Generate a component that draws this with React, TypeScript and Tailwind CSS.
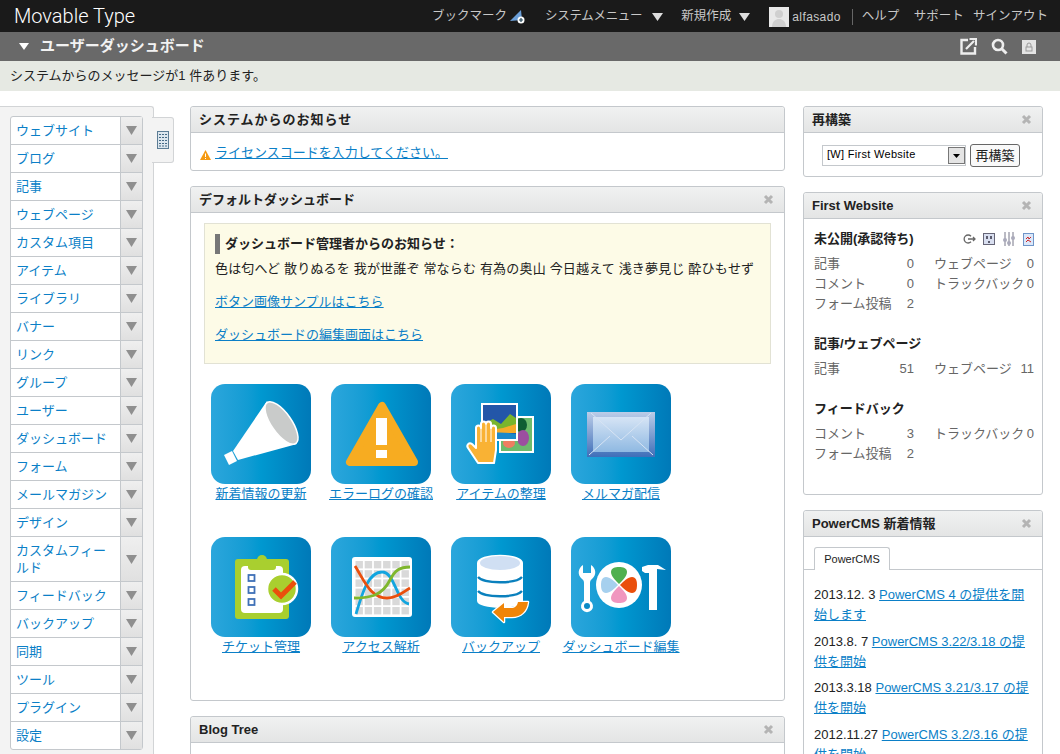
import type { ReactNode } from 'react'

const FONT = "font-['Liberation_Sans','Noto_Sans_CJK_JP',sans-serif]"

const menuItems = [
  'ウェブサイト', 'ブログ', '記事', 'ウェブページ', 'カスタム項目', 'アイテム', 'ライブラリ', 'バナー',
  'リンク', 'グループ', 'ユーザー', 'ダッシュボード', 'フォーム', 'メールマガジン', 'デザイン',
  'カスタムフィールド', 'フィードバック', 'バックアップ', '同期', 'ツール', 'プラグイン', '設定',
]

function CloseIcon() {
  return (
    <svg width="11" height="11" viewBox="0 0 11 11" className="shrink-0">
      <path d="M2 2l7 7M9 2l-7 7" stroke="#b4b4b4" strokeWidth="3" />
    </svg>
  )
}

function Widget({ title, titleClass = '', closable = true, className = '', children }: { title: string; titleClass?: string; closable?: boolean; className?: string; children: ReactNode }) {
  return (
    <section className={`border border-[#c4c8cc] rounded-[3px] bg-white ${className}`}>
      <header className="h-[26px] flex items-center justify-between pl-[8px] pr-[10px] bg-linear-to-b from-[#f0f1f1] to-[#e4e5e5] border-b border-[#c4c8cc] rounded-t-[3px]">
        <h2 className={`text-[13px] font-bold text-[#222] leading-none ${titleClass}`}>{title}</h2>
        {closable && <CloseIcon />}
      </header>
      {children}
    </section>
  )
}

function Megaphone() {
  return (
    <svg viewBox="0 0 100 100" className="w-full h-full">
      <path d="M13 71l8-4 5 10-8 4z" fill="#fff" />
      <path d="M56 17L22 67l5 9 59-16z" fill="#fff" />
      <ellipse cx="70.500" cy="39" rx="10" ry="25" transform="rotate(-35 70.500 39)" fill="#c9cbca" stroke="#fff" strokeWidth="1.500" />
    </svg>
  )
}

function Warning() {
  return (
    <svg viewBox="0 0 100 100" className="w-full h-full">
      <path d="M51 22L19 78h64z" fill="#f7ac21" stroke="#f7ac21" strokeWidth="8" strokeLinejoin="round" />
      <rect x="45" y="34" width="11" height="27" fill="#fff" />
      <rect x="45" y="66" width="11" height="8" fill="#fff" />
    </svg>
  )
}

function Photos() {
  return (
    <svg viewBox="0 0 100 100" className="w-full h-full">
      <rect x="48" y="32" width="35" height="37" fill="#fff" />
      <rect x="50" y="34" width="31" height="33" fill="#6dbb6d" />
      <ellipse cx="70" cy="41" rx="6" ry="7" fill="#0f5d34" />
      <ellipse cx="72" cy="54" rx="6" ry="8" fill="#9c4fa0" />
      <ellipse cx="58" cy="59" rx="6" ry="5" fill="#ef7d62" />
      <rect x="30" y="19" width="37" height="38" fill="#fff" />
      <rect x="32" y="21" width="33" height="34" fill="#2356a8" />
      <path d="M32 40l10-5 8 5 9-10 6 4v13H32z" fill="#7ab52d" />
      <path d="M32 47l20-3 13-4v9H32z" fill="#f6ab2a" />
      <path d="M32 50c10-2 22-2 33 0v5H32z" fill="#1b88c9" />
      <path d="M27 79L17 64c-2-3 1-6 4-4l4 4V44a2.500 2.500 0 0 1 5 0V40a2.500 2.500 0 0 1 5 0a2.500 2.500 0 0 1 5 0V44a2.500 2.500 0 0 1 5 0V66L43 79z" fill="#f9b234" stroke="#fff" strokeWidth="2" strokeLinejoin="round" />
      <path d="M30 44V58M35 41V58M40 44V58" stroke="#fff" strokeWidth="1" />
    </svg>
  )
}

function Envelope() {
  return (
    <svg viewBox="0 0 100 100" className="w-full h-full">
      <defs>
        <linearGradient id="env" x1="0" y1="0" x2="0" y2="1">
          <stop offset="0" stopColor="#d6e4f5" />
          <stop offset="1" stopColor="#8fb9e2" />
        </linearGradient>
        <linearGradient id="envOuter" x1="0" y1="0" x2="0" y2="1">
          <stop offset="0" stopColor="#bccde8" />
          <stop offset="1" stopColor="#3f6fb9" />
        </linearGradient>
      </defs>
      <rect x="16" y="28" width="68" height="45" fill="url(#envOuter)" />
      <rect x="22" y="33" width="56" height="35" fill="url(#env)" />
      <path d="M20 29l30 27 30-27M18 71l21-19M82 71L61 52" fill="none" stroke="#d7e4f4" strokeWidth="1" />
    </svg>
  )
}

function Clipboard() {
  return (
    <svg viewBox="0 0 100 100" className="w-full h-full">
      <rect x="24" y="22" width="54" height="60" rx="3" fill="#a9cf2f" />
      <rect x="46" y="18" width="10" height="10" rx="5" fill="#a9cf2f" />
      <rect x="30" y="29" width="42" height="47" rx="4" fill="#fff" />
      <path d="M37 25h28v5a3 3 0 0 1-3 3H40a3 3 0 0 1-3-3z" fill="#a9cf2f" />
      {[38, 50, 62].map((y) => (
        <rect key={y} x="37.500" y={y} width="6" height="6" fill="#fff" stroke="#3f70b7" strokeWidth="1.800" />
      ))}
      <circle cx="71" cy="52" r="15" fill="#a9cf2f" stroke="#fff" strokeWidth="2.500" />
      <path d="M63 52l7 7 14-14" fill="none" stroke="#ea4f0c" strokeWidth="5" />
    </svg>
  )
}

function ChartIcon() {
  const cells = [0, 1, 2, 3, 4, 5]
  return (
    <svg viewBox="0 0 100 100" className="w-full h-full">
      <rect x="21" y="20" width="60" height="60" rx="3" fill="#fff" />
      {cells.map((r) => cells.map((c) => (
        <rect key={`${r}-${c}`} x={24.5 + c * 9.2} y={24 + r * 9.2} width="7.4" height="7.4" fill="#d9d9d9" />
      )))}
      <path d="M25 77c6-20 12-42 26-42 13 0 14 30 27 32" fill="none" stroke="#12a5df" strokeWidth="2.800" />
      <path d="M24 29c9 14 15 32 32 32 10 0 16-6 23-10" fill="none" stroke="#ea4f0c" strokeWidth="2.800" />
      <path d="M23 61c16 0 28-2 36-18 5-10 10-13 20-13" fill="none" stroke="#7fb72d" strokeWidth="2.800" />
    </svg>
  )
}

function Database() {
  return (
    <svg viewBox="0 0 100 100" className="w-full h-full">
      <path d="M26 26c0-11 46-11 46 0v38c0 9-46 9-46 0z" fill="#fff" />
      <ellipse cx="49" cy="26" rx="20" ry="7" fill="#d0dff3" />
      <path d="M27 40c6 7 38 7 44 0M27 54c6 7 38 7 44 0" fill="none" stroke="#0a80bd" strokeWidth="2.400" />
      <path d="M42 75L53 66V71H60c4 0 6-2 7-6H77c-1 9-7 15-16 15H53V85z" fill="#f08508" stroke="#fff" strokeWidth="2.500" strokeLinejoin="round" paintOrder="stroke" />
    </svg>
  )
}

function Tools() {
  const petal = 'M48 47C44 43 40 39 40 35C40 31 44 30 48 30C52 30 56 31 56 35C56 39 52 43 48 47z'
  return (
    <svg viewBox="0 0 100 100" className="w-full h-full">
      <path d="M12 28c-5 3-6 10-1 14 2 1 2 3 2 5v17a6 6 0 1 0 6 0V47c0-2 0-4 2-5 5-4 4-11-1-14v8h-8z" fill="#fff" />
      <circle cx="16" cy="69" r="3" fill="#0a8ac6" />
      <circle cx="48" cy="48" r="23" fill="#fff" />
      <path d={petal} fill="#4fb04f" />
      <path d={petal} fill="#ea4f0c" transform="rotate(90 48 48)" />
      <path d={petal} fill="#f096bf" transform="rotate(180 48 48)" />
      <path d={petal} fill="#a6d0ee" transform="rotate(270 48 48)" />
      <path d="M71 30l6-2h10l8 5-9-1v41h-8V36h-4l-3-2z" fill="#fff" />
    </svg>
  )
}

const tiles = [
  { label: '新着情報の更新', icon: <Megaphone /> },
  { label: 'エラーログの確認', icon: <Warning /> },
  { label: 'アイテムの整理', icon: <Photos /> },
  { label: 'メルマガ配信', icon: <Envelope /> },
  { label: 'チケット管理', icon: <Clipboard /> },
  { label: 'アクセス解析', icon: <ChartIcon /> },
  { label: 'バックアップ', icon: <Database /> },
  { label: 'ダッシュボード編集', icon: <Tools /> },
]

function Sidebar() {
  return (
    <aside className="relative w-[154px] shrink-0 bg-[#f3f3f3] border-t border-r border-[#d2d4d6] rounded-tr-[3px] pt-[9px] pl-[10px] h-[660px]">
      <ul className="w-[133px] border border-[#c4c8cc] rounded-[3px] bg-white">
        {menuItems.map((item) => (
          <li key={item} className="flex border-b last:border-b-0 border-[#c4c8cc]">
            <a className="flex-1 min-w-0 min-h-[27px] pl-[5px] pr-[4px] py-[5px] text-[13px] leading-[17px] text-[#0b7fc7]">{item}</a>
            <div className="w-[22px] shrink-0 border-l border-[#c4c8cc] bg-linear-to-b from-[#efefef] to-[#e0e0e0] flex items-center justify-center">
              <svg width="11" height="9" viewBox="0 0 11 9"><path d="M0 0h11L5.500 9z" fill="#8f8f8f" /></svg>
            </div>
          </li>
        ))}
      </ul>
      <div className="absolute left-[152px] top-[10px] w-[22px] h-[46px] bg-[#f3f3f3] border border-l-0 border-[#d2d4d6] rounded-r-[3px] flex items-center justify-center">
        <svg width="12" height="18" viewBox="0 0 12 18">
          <rect x=".5" y=".5" width="11" height="17" fill="#dce6ee" stroke="#5b7c95" />
          <path d="M2 3.500h8M2 6.500h8M2 9.500h8M2 12.500h8M2 15h8" stroke="#456a86" strokeWidth="1" strokeDasharray="2 1" />
        </svg>
      </div>
    </aside>
  )
}

function Stat({ label, value, wide = false }: { label: string; value: string; wide?: boolean }) {
  return (
    <div className={`flex justify-between ${wide ? 'w-[100px] ml-[20px]' : 'w-[100px]'}`}>
      <span>{label}</span>
      <span>{value}</span>
    </div>
  )
}

function StatRow({ left, right }: { left: [string, string]; right?: [string, string] }) {
  return (
    <div className="flex h-[20px] leading-[20px] text-[13px] text-[#666]">
      <Stat label={left[0]} value={left[1]} />
      {right && <Stat label={right[0]} value={right[1]} wide />}
    </div>
  )
}

const news = [
  ['2013.12. 3', 'PowerCMS 4 の提供を開始します'],
  ['2013.8. 7', 'PowerCMS 3.22/3.18 の提供を開始'],
  ['2013.3.18', 'PowerCMS 3.21/3.17 の提供を開始'],
  ['2012.11.27', 'PowerCMS 3.2/3.16 の提供を開始'],
]

function RightColumn() {
  return (
    <div className="w-[240px] ml-[18px] shrink-0 flex flex-col gap-[15px]">
      <Widget title="再構築" className="h-[71px]">
        <div className="flex items-center pl-[18px] pt-[11px]">
          <div className="w-[144px] h-[21px] border border-[#c4c8cc] flex items-center justify-between pl-[4px]">
            <span className="text-[11px] tracking-[0.3px] text-black mb-[2px]">[W] First Website</span>
            <span className="w-[17px] h-[17px] border border-[#777] bg-[#e4e4e4] flex items-center justify-center">
              <svg width="7" height="4" viewBox="0 0 7 4"><path d="M0 0h7L3.500 4z" fill="#000" /></svg>
            </span>
          </div>
          <button className="ml-[4px] w-[50px] h-[23px] border border-[#666] rounded-[3px] text-[13px] leading-none text-[#222] bg-[#f9f9f9]">再構築</button>
        </div>
      </Widget>
      <Widget title="First Website" className="h-[303px]">
        <div className="pl-[10px] pr-[8px] pt-[8px]">
          <div className="flex items-center justify-between h-[24px]">
            <h3 className="text-[13px] font-bold text-[#222]">未公開(承認待ち)</h3>
            <div className="flex items-center gap-[7px]">
              <svg width="13" height="12" viewBox="0 0 13 12"><path d="M8 3.200A4 4 0 1 0 8 8.800M5 6h7M10 4l2 2-2 2" fill="none" stroke="#666" strokeWidth="1.300" /></svg>
              <svg width="12" height="12" viewBox="0 0 12 12"><rect x=".5" y=".5" width="11" height="11" fill="#d9dff0" stroke="#667" /><path d="M4 3v3M8 3v3M6 8v2" stroke="#334" strokeWidth="1.500" /></svg>
              <svg width="14" height="14" viewBox="0 0 14 14"><path d="M3 0v14M7 0v14M11 0v14" stroke="#778" /><circle cx="3" cy="8" r="2" fill="#aab" /><circle cx="7" cy="11" r="2" fill="#aab" /><circle cx="11" cy="6" r="2" fill="#aab" /></svg>
              <svg width="11" height="13" viewBox="0 0 11 13"><rect x=".5" y=".5" width="10" height="12" fill="#dbe8fa" stroke="#6f95c8" /><path d="M3 6l2-2 1 2 2-2M3 9l2-2 3 2" stroke="#c22" fill="none" /></svg>
            </div>
          </div>
          <div className="mt-[3px]">
            <StatRow left={['記事', '0']} right={['ウェブページ', '0']} />
            <StatRow left={['コメント', '0']} right={['トラックバック', '0']} />
            <StatRow left={['フォーム投稿', '2']} />
          </div>
          <h3 className="text-[13px] font-bold text-[#222] mt-[20px] h-[25px] leading-[20px]">記事/ウェブページ</h3>
          <StatRow left={['記事', '51']} right={['ウェブページ', '11']} />
          <h3 className="text-[13px] font-bold text-[#222] mt-[20px] h-[25px] leading-[20px]">フィードバック</h3>
          <StatRow left={['コメント', '3']} right={['トラックバック', '0']} />
          <StatRow left={['フォーム投稿', '2']} />
        </div>
      </Widget>
      <Widget title="PowerCMS 新着情報" className="h-[300px]">
        <div className="pt-[10px] border-b border-[#c4c8cc] pl-[10px] h-[33px]">
          <div className="w-[76px] h-[23px] border border-b-0 border-[#c4c8cc] rounded-t-[3px] bg-white text-[11px] text-[#222] flex items-center justify-center">PowerCMS</div>
        </div>
        <ul className="px-[10px] pt-[15px] text-[13px] leading-[20px] text-[#222]">
          {news.map(([date, title]) => (
            <li key={date} className="mb-[6.5px]">
              {date} <a className="text-[#0b7fc7] underline">{title}</a>
            </li>
          ))}
        </ul>
      </Widget>
    </div>
  )
}

function MainColumn() {
  return (
    <div className="w-[595px] ml-[36px] shrink-0 flex flex-col gap-[15px]">
      <Widget title="システムからのお知らせ" titleClass="tracking-[1px]" closable={false} className="h-[65px]">
        <div className="flex items-center pl-[9px] pt-[10px] text-[13px] leading-[20px]">
          <svg width="11" height="10" viewBox="0 0 11 10" className="mr-[4px] mt-[3px]"><path d="M5.500 0L11 10H0z" fill="#f59a12" /><rect x="5" y="3.500" width="1" height="3.500" fill="#fff" /><rect x="5" y="8" width="1" height="1" fill="#fff" /></svg>
          <a className="text-[#0b7fc7] underline">ライセンスコードを入力してください。</a>
        </div>
      </Widget>
      <Widget title="デフォルトダッシュボード" className="h-[515px]">
        <div className="mx-[13px] mt-[10px] h-[141px] border border-[#e2e2d4] bg-[#fdfbe7] pl-[10px] pt-[10px] text-[13px] text-[#222]">
          <h3 className="border-l-[5px] border-[#777] pl-[5px] font-bold h-[20px] leading-[20px]">ダッシュボード管理者からのお知らせ：</h3>
          <p className="mt-[5px] leading-[20px] whitespace-nowrap tracking-[0.18px]">色は匂へど 散りぬるを 我が世誰ぞ 常ならむ 有為の奥山 今日越えて 浅き夢見じ 酔ひもせず</p>
          <p className="mt-[13px] leading-[20px]"><a className="text-[#0b7fc7] underline">ボタン画像サンプルはこちら</a></p>
          <p className="mt-[13px] leading-[20px]"><a className="text-[#0b7fc7] underline">ダッシュボードの編集画面はこちら</a></p>
        </div>
        <div className="mt-[20px] ml-[10px] grid grid-cols-[repeat(4,120px)] auto-rows-[153px]">
          {tiles.map((tile) => (
            <div key={tile.label} className="flex flex-col items-center">
              <div className="w-[100px] h-[100px] rounded-[14px] bg-linear-to-r from-[#2ba6dc] via-[#0098d0] to-[#0079b8]">{tile.icon}</div>
              <a className="mt-[1px] whitespace-nowrap text-[13px] leading-[18px] text-[#0b7fc7] underline">{tile.label}</a>
            </div>
          ))}
        </div>
      </Widget>
      <Widget title="Blog Tree" className="h-[100px]">
        <div />
      </Widget>
    </div>
  )
}

export default function App() {
  return (
    <div className={`${FONT} w-[1060px] h-[754px] overflow-hidden bg-white`}>
      <div className="h-[32px] bg-[#1a1a1a] flex items-center pl-[14px] pt-[1px] text-[12.5px] text-[#c8c8c8] whitespace-nowrap">
        <span className="font-['Roboto',sans-serif] font-light text-[20px] text-white w-[418px] shrink-0 mb-[2px]">Movable Type</span>
        <span>ブックマーク</span>
        <svg width="15" height="14" viewBox="0 0 15 14" className="ml-[3px] shrink-0">
          <path d="M0 11L11 0l1 10z" fill="#6b9fd8" />
          <circle cx="11" cy="10" r="3.500" fill="#fff" />
          <path d="M9 10h4M11 8v4" stroke="#245" strokeWidth="1.200" />
        </svg>
        <span className="ml-[20px] tracking-[-0.3px]">システムメニュー</span>
        <svg width="11" height="8" viewBox="0 0 11 8" className="ml-[10px] shrink-0"><path d="M0 0h11L5.500 8z" fill="#ddd" /></svg>
        <span className="ml-[18px]">新規作成</span>
        <svg width="11" height="8" viewBox="0 0 11 8" className="ml-[8px] shrink-0"><path d="M0 0h11L5.500 8z" fill="#ddd" /></svg>
        <div className="ml-[19px] w-[20px] h-[20px] shrink-0 bg-[#e8e8e8] flex items-end justify-center overflow-hidden">
          <svg width="20" height="20" viewBox="0 0 20 20"><circle cx="10" cy="7" r="4" fill="#cfcfcf" /><path d="M3 20c0-6 4-8 7-8s7 2 7 8z" fill="#cfcfcf" /></svg>
        </div>
        <span className="ml-[3px] text-[12px] tracking-[0.4px] pr-[11px] border-r border-[#666] leading-[16px]">alfasado</span>
        <span className="ml-[9px]">ヘルプ</span>
        <span className="ml-[14.5px]">サポート</span>
        <span className="ml-[9px]">サインアウト</span>
      </div>
      <div className="h-[29px] bg-[#696969] flex items-center pl-[19px] pr-[24px]">
        <svg width="10" height="7" viewBox="0 0 10 7"><path d="M0 0h10L5 7z" fill="#fff" /></svg>
        <h1 className="ml-[11px] text-[15px] font-bold text-[#f2f2f2]">ユーザーダッシュボード</h1>
        <div className="ml-auto flex items-center gap-[14px]">
          <svg width="17" height="17" viewBox="0 0 17 17"><path d="M8 2H1.500v13.500H15V9" fill="none" stroke="#eee" strokeWidth="2.400" /><path d="M6 11l8-8M9.500 1H16v6.500" fill="none" stroke="#eee" strokeWidth="2.200" /></svg>
          <svg width="17" height="17" viewBox="0 0 17 17"><circle cx="7" cy="7" r="5" fill="none" stroke="#eee" strokeWidth="2.600" /><path d="M10.500 10.500l5 5" stroke="#eee" strokeWidth="3" /></svg>
          <svg width="14" height="14" viewBox="0 0 14 14"><rect width="14" height="14" fill="#e4e4e4" /><rect x="4" y="7" width="6" height="4" fill="none" stroke="#999" /><path d="M5 7V5a2 2 0 0 1 4 0v2" fill="none" stroke="#999" /></svg>
        </div>
      </div>
      <div className="h-[30px] bg-[#e6e9e3] pl-[10px] flex items-center text-[13px] text-[#222]">システムからのメッセージが1 件あります。</div>
      <div className="flex pt-[15px]">
        <Sidebar />
        <MainColumn />
        <RightColumn />
      </div>
    </div>
  )
}
